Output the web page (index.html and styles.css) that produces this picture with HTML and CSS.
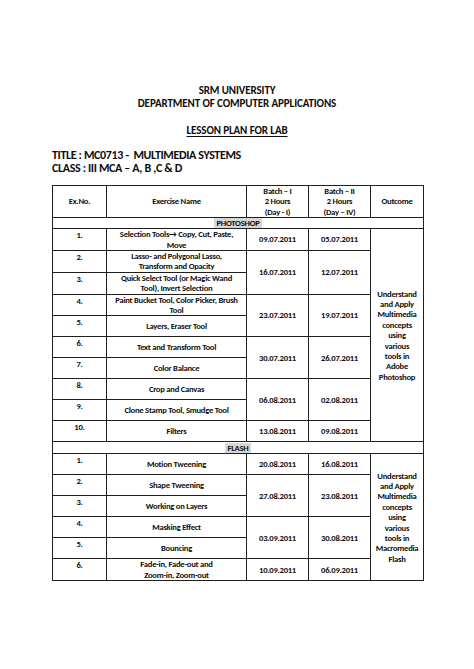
FILE: index.html
```html
<!DOCTYPE html>
<html>
<head>
<meta charset="utf-8">
<link rel="stylesheet" href="styles.css">
</head>
<body>
<div class="page">
  <div class="head">
    <div class="hline">SRM UNIVERSITY</div>
    <div class="hline">DEPARTMENT OF COMPUTER APPLICATIONS</div>
    <div class="hline sub"><span class="ul">LESSON PLAN FOR LAB</span></div>
  </div>
  <div class="title">
    <div>TITLE : MC0713 -&nbsp; MULTIMEDIA SYSTEMS</div>
    <div>CLASS : III MCA – A, B ,C &amp; D</div>
  </div>
  <table class="plan">
    <colgroup>
      <col class="c-no"><col class="c-ex"><col class="c-b1"><col class="c-b2"><col class="c-out">
    </colgroup>
    <tr class="r-head">
      <th>Ex.No.</th>
      <th>Exercise Name</th>
      <th>Batch – I<br>2 Hours<br>(Day - I)</th>
      <th>Batch – II<br>2 Hours<br>(Day – IV)</th>
      <th>Outcome</th>
    </tr>
    <tr class="r-sec"><td colspan="5"><span class="hl">PHOTOSHOP</span></td></tr>
    <tr class="r">
      <td class="no">1.</td>
      <td class="ex">Selection Tools→ Copy, Cut, Paste,<br>Move</td>
      <td>09.07.2011</td><td>05.07.2011</td>
      <td class="out" rowspan="10">Understand<br>and Apply<br>Multimedia<br>concepts<br>using<br>various<br>tools in<br>Adobe<br>Photoshop</td>
    </tr>
    <tr class="r">
      <td class="no">2.</td>
      <td class="ex">Lasso- and Polygonal Lasso,<br>Transform and Opacity</td>
      <td rowspan="2">16.07.2011</td><td rowspan="2">12.07.2011</td>
    </tr>
    <tr class="r">
      <td class="no">3.</td>
      <td class="ex">Quick Select Tool (or Magic Wand<br>Tool), Invert Selection</td>
    </tr>
    <tr class="r">
      <td class="no">4.</td>
      <td class="ex">Paint Bucket Tool, Color Picker, Brush<br>Tool</td>
      <td rowspan="2">23.07.2011</td><td rowspan="2">19.07.2011</td>
    </tr>
    <tr class="r">
      <td class="no">5.</td>
      <td class="ex">Layers, Eraser Tool</td>
    </tr>
    <tr class="r">
      <td class="no">6.</td>
      <td class="ex">Text and Transform Tool</td>
      <td rowspan="2">30.07.2011</td><td rowspan="2">26.07.2011</td>
    </tr>
    <tr class="r">
      <td class="no">7.</td>
      <td class="ex">Color Balance</td>
    </tr>
    <tr class="r">
      <td class="no">8.</td>
      <td class="ex">Crop and Canvas</td>
      <td rowspan="2">06.08.2011</td><td rowspan="2">02.08.2011</td>
    </tr>
    <tr class="r">
      <td class="no">9.</td>
      <td class="ex">Clone Stamp Tool, Smudge Tool</td>
    </tr>
    <tr class="r">
      <td class="no">10.</td>
      <td class="ex">Filters</td>
      <td>13.08.2011</td><td>09.08.2011</td>
    </tr>
    <tr class="r-sec fl"><td colspan="5"><span class="hl">FLASH</span></td></tr>
    <tr class="r">
      <td class="no">1.</td>
      <td class="ex">Motion Tweening</td>
      <td>20.08.2011</td><td>16.08.2011</td>
      <td class="out" rowspan="6">Understand<br>and Apply<br>Multimedia<br>concepts<br>using<br>various<br>tools in<br>Macromedia<br>Flash</td>
    </tr>
    <tr class="r">
      <td class="no">2.</td>
      <td class="ex">Shape Tweening</td>
      <td rowspan="2">27.08.2011</td><td rowspan="2">23.08.2011</td>
    </tr>
    <tr class="r">
      <td class="no">3.</td>
      <td class="ex">Working on Layers</td>
    </tr>
    <tr class="r">
      <td class="no">4.</td>
      <td class="ex">Masking Effect</td>
      <td rowspan="2">03.09.2011</td><td rowspan="2">30.08.2011</td>
    </tr>
    <tr class="r">
      <td class="no">5.</td>
      <td class="ex">Bouncing</td>
    </tr>
    <tr class="r">
      <td class="no">6.</td>
      <td class="ex">Fade-in, Fade-out and<br>Zoom-in, Zoom-out</td>
      <td>10.09.2011</td><td>06.09.2011</td>
    </tr>
  </table>
</div>
</body>
</html>
```
FILE: styles.css
```css
html, body {
  margin: 0;
  padding: 0;
  background: #fff;
}
body {
  font-family: "Carlito", "Lato", "Liberation Sans", sans-serif;
  font-weight: 700;
  color: #0d0d0d;
}
.page {
  width: 474px;
  height: 669px;
  padding-top: 84px;
  box-sizing: border-box;
}
.head {
  text-align: center;
  font-size: 11px;
  line-height: 13px;
  letter-spacing: -0.1px;
}
.sub {
  margin-top: 14px;
}
.ul {
  text-decoration: underline;
  text-underline-offset: 2px;
}
.title {
  margin: 12px 0 0 52px;
  font-size: 12px;
  line-height: 13px;
  letter-spacing: -0.35px;
}
.plan {
  margin: 10px 0 0 52px;
  width: 371px;
  border-collapse: collapse;
  table-layout: fixed;
  font-size: 8.6px;
  line-height: 10.4px;
  letter-spacing: -0.25px;
}
.c-no { width: 54px; }
.c-ex { width: 140px; }
.c-b1 { width: 62px; }
.c-b2 { width: 62px; }
.c-out { width: 53px; }
.plan th, .plan td {
  border: 1px solid #1e1e1e;
  padding: 0;
  text-align: center;
  vertical-align: middle;
  font-weight: 700;
}
.r-head { height: 31px; }
.r-sec { height: 11px; }
.r-sec.fl { height: 12px; }
.r-sec td {
  line-height: 10px;
  padding: 0;
}
.hl {
  background: #d6d6d6;
  padding: 0 2px;
  display: inline-block;
}
.r { height: 21px; }
.plan td.no {
  vertical-align: top;
  padding-top: 1px;
}
.plan td.out {
  line-height: 10.4px;
}
```
